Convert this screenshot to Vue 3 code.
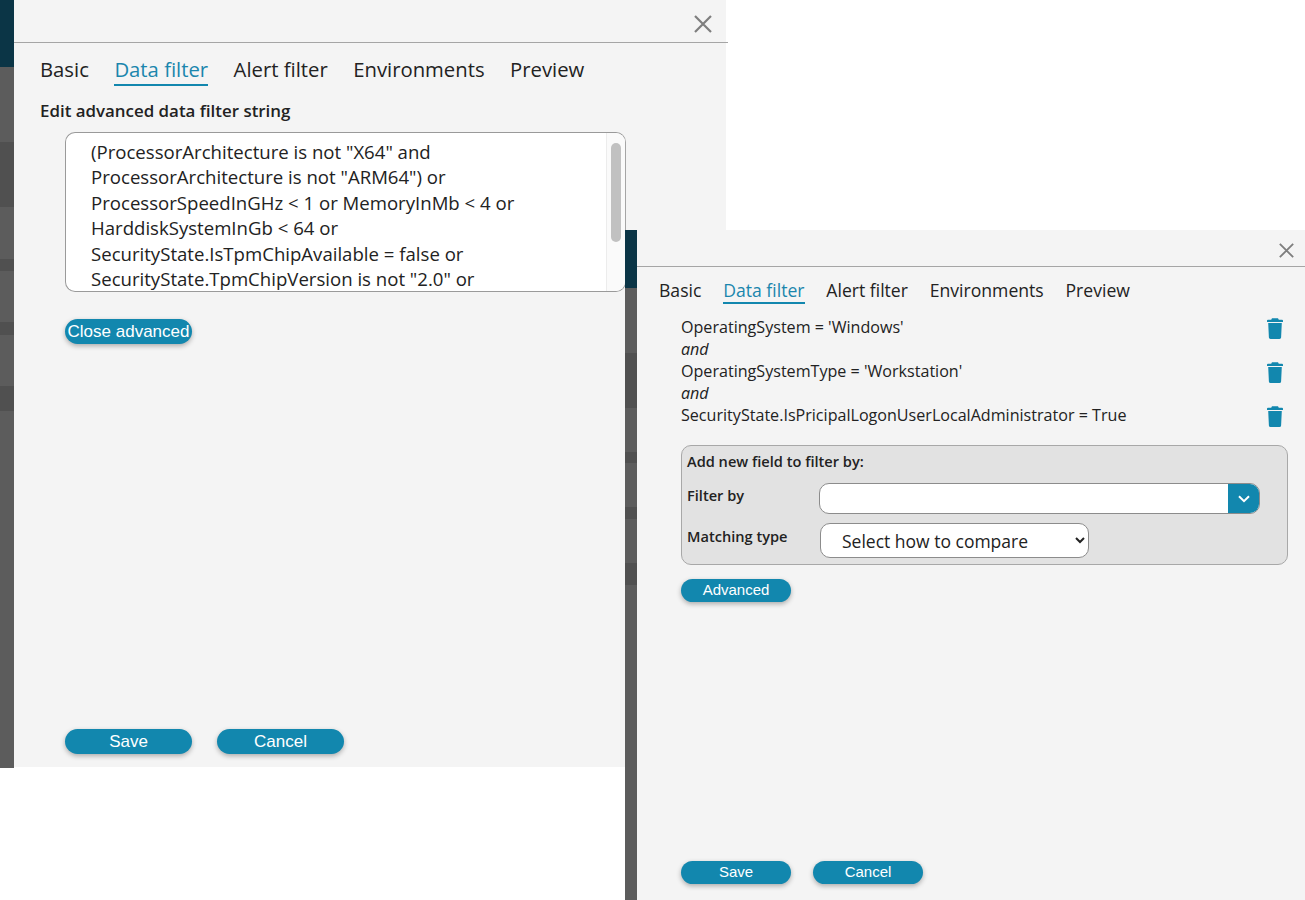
<script setup>
const tabs = ['Basic', 'Data filter', 'Alert filter', 'Environments', 'Preview']
const filterLines = [
  '(ProcessorArchitecture is not "X64" and',
  'ProcessorArchitecture is not "ARM64") or',
  'ProcessorSpeedInGHz < 1 or MemoryInMb < 4 or',
  'HarddiskSystemInGb < 64 or',
  'SecurityState.IsTpmChipAvailable = false or',
  'SecurityState.TpmChipVersion is not "2.0" or'
]
const rows = [
  { text: "OperatingSystem = 'Windows'", trash: true },
  { text: 'and', italic: true },
  { text: "OperatingSystemType = 'Workstation'", trash: true },
  { text: 'and', italic: true },
  { text: 'SecurityState.IsPricipalLogonUserLocalAdministrator = True', trash: true }
]
</script>

<template>
  <div class="desk">
    <section class="win win-a">
      <div class="strip">
        <i class="seg teal s67"></i><i class="seg s75"></i><i class="seg dark s63"></i><i class="seg s52"></i>
        <i class="seg dark s12"></i><i class="seg s51"></i><i class="seg dark s13"></i><i class="seg s51"></i>
        <i class="seg dark s25"></i><i class="seg grow"></i>
      </div>
      <div class="panel panel-a">
        <header class="head">
          <svg class="close" viewBox="0 0 18 18"><path d="M1 1l16 16M17 1L1 17" /></svg>
        </header>
        <nav class="tabs">
          <span v-for="t in tabs" :key="t" class="tab" :class="{ on: t === 'Data filter' }">{{ t }}</span>
        </nav>
        <h2 class="edit-title">Edit advanced data filter string</h2>
        <div class="editor">
          <div class="editor-text">
            <div v-for="l in filterLines" :key="l">{{ l }}</div>
          </div>
          <div class="track"><div class="thumb"></div></div>
        </div>
        <button class="btn btn-close">Close advanced</button>
        <div class="foot foot-a">
          <button class="btn big">Save</button>
          <button class="btn big">Cancel</button>
        </div>
      </div>
    </section>

    <section class="win win-b">
      <div class="strip strip-b">
        <i class="seg teal s58"></i><i class="seg s65"></i><i class="seg dark s55"></i><i class="seg s44"></i>
        <i class="seg dark s11"></i><i class="seg s44"></i><i class="seg dark s12"></i><i class="seg s44"></i>
        <i class="seg dark s22"></i><i class="seg grow"></i>
      </div>
      <div class="panel panel-b">
        <header class="head head-b">
          <svg class="close close-b" viewBox="0 0 18 18"><path d="M1 1l16 16M17 1L1 17" /></svg>
        </header>
        <nav class="tabs tabs-b">
          <span v-for="t in tabs" :key="t" class="tab" :class="{ on: t === 'Data filter' }">{{ t }}</span>
        </nav>
        <div class="rows">
          <div v-for="(r, i) in rows" :key="i" class="row">
            <span :class="{ it: r.italic }">{{ r.text }}</span>
            <svg v-if="r.trash" class="trash" viewBox="0 0 16 21">
              <path d="M5 0.3h6l.8 1.5H15a1 1 0 0 1 1 1V4H0V2.8a1 1 0 0 1 1-1h3.200z" />
              <path d="M1.200 5h13.600l-.7 14.500A1.600 1.600 0 0 1 12.500 21h-9a1.600 1.600 0 0 1-1.600-1.500z" />
            </svg>
          </div>
        </div>
        <div class="box">
          <div class="box-title">Add new field to filter by:</div>
          <div class="field f1">
            <label>Filter by</label>
            <div class="combo">
              <div class="combo-in"></div>
              <div class="combo-btn">
                <svg viewBox="0 0 12 8"><path d="M1 1.200l5 5 5-5" /></svg>
              </div>
            </div>
          </div>
          <div class="field f2">
            <label>Matching type</label>
            <select class="sel"><option>Select how to compare</option></select>
          </div>
        </div>
        <button class="btn small btn-adv">Advanced</button>
        <div class="foot foot-b">
          <button class="btn small">Save</button>
          <button class="btn small">Cancel</button>
        </div>
      </div>
    </section>
  </div>
</template>

<style>
html, body { margin: 0; background: #fff; }
</style>

<style scoped>
.desk {
  position: relative;
  width: 1305px;
  height: 900px;
  overflow: hidden;
  background: #fff;
  font-family: "Open Sans", "Liberation Sans", sans-serif;
  color: #222;
}
.win { position: absolute; display: flex; }
.win-a { left: 0; top: 0; width: 726px; height: 768px; }
.win-b { left: 625px; top: 230px; width: 680px; height: 670px; }

.strip { width: 14px; flex: none; display: flex; flex-direction: column; background: #5c5c5c; }
.strip-b { width: 12px; }
.seg { display: block; flex: none; background: #5c5c5c; }
.seg.dark { background: #505050; }
.seg.teal { background: #0b3546; }
.seg.grow { flex: 1; }
.s67 { height: 67px; } .s75 { height: 75px; } .s63 { height: 65px; } .s52 { height: 52px; }
.s12 { height: 12px; } .s51 { height: 51px; } .s13 { height: 13px; } .s25 { height: 25px; }
.s58 { height: 58px; } .s65 { height: 65px; } .s55 { height: 55px; } .s44 { height: 44px; }
.s11 { height: 11px; } .s22 { height: 22px; }

.panel {
  flex: 1;
  display: flex;
  flex-direction: column;
  background: #f4f4f4;
  min-width: 0;
}
.panel-a { padding-bottom: 13px; margin-bottom: 1px; }
.panel-b { padding-bottom: 16px; }
.head {
  height: 42px;
  width: 714px;
  border-bottom: 1.500px solid #a5a5a5;
  display: flex;
  justify-content: flex-end;
  align-items: flex-start;
  flex: none;
}
.head-b { height: 36px; width: 668px; }
.close { width: 18px; height: 18px; margin: 15px 16px 0 0; }
.close-b { width: 15px; height: 15px; margin: 13px 11px 0 0; }
.close path { stroke: #7e7e7e; stroke-width: 2.200; fill: none; }

.tabs { display: flex; gap: 25.500px; padding: 13px 0 0 26px; font-size: 20.300px; line-height: 27px; flex: none; }
.tab { padding-bottom: 1px; border-bottom: 2px solid transparent; }
.tab.on { color: #1a86ad; border-bottom-color: #1287ae; }
.tabs-b { gap: 21.800px; padding: 11px 0 0 22px; font-size: 17.600px; line-height: 24px; }
.tabs-b .tab { padding-bottom: 0; }

.edit-title { margin: 14px 0 0 26px; font-size: 16.900px; line-height: 22px; font-weight: 600; color: #222; }

.editor {
  position: relative;
  box-sizing: border-box;
  margin: 10px 0 0 51px;
  width: 561px;
  height: 160px;
  background: #fff;
  border: 1px solid #9a9a9a;
  border-right-color: #a5a5a5;
  border-radius: 10px;
  overflow: hidden;
}
.editor-text { padding: 6px 40px 0 25px; font-size: 18.600px; line-height: 25.400px; white-space: nowrap; }
.track {
  position: absolute;
  right: 0;
  top: 0;
  bottom: 0;
  width: 18px;
  background: #fafafa;
  border-left: 1px solid #ececec;
}
.thumb { position: absolute; left: 4px; top: 10px; width: 10px; height: 99px; border-radius: 5px; background: #c1c1c1; }

.btn {
  display: block;
  border: 0;
  padding: 0;
  background: #1287ae;
  color: #fff;
  border-radius: 13px;
  font-family: "Liberation Sans", Arial, sans-serif;
  font-size: 17px;
  box-shadow: 0 2px 5px rgba(0, 0, 0, .3);
}
.btn-close { margin: 27px 0 0 51px; width: 127px; height: 25px; }
.big { width: 127px; height: 25px; }
.foot { margin-top: auto; display: flex; }
.foot-a { margin-left: 51px; gap: 25px; }
.small { width: 110px; height: 23px; padding-bottom: 2px; font-size: 15px; border-radius: 12px; }
.foot-b { margin-left: 44px; gap: 22px; }

.rows { margin: 12px 22px 0 44px; font-size: 16.100px; line-height: 22px; flex: none; }
.row { display: flex; justify-content: space-between; align-items: center; height: 22px; }
.it { font-style: italic; }
.trash { width: 16px; height: 21px; margin-top: 2px; fill: #1287ae; }

.box {
  box-sizing: border-box;
  margin: 19px 0 0 44px;
  width: 607px;
  height: 120px;
  background: #e2e2e2;
  border: 1px solid #a8a8a8;
  border-radius: 10px;
  padding: 5px 0 0 5px;
  font-size: 14.600px;
  font-weight: 600;
  flex: none;
}
.box-title { line-height: 20px; }
.field { display: flex; }
.field label { width: 132px; flex: none; line-height: 20px; }
.f1 { margin-top: 12px; align-items: center; }
.f1 label { padding-bottom: 8px; }
.f2 { margin-top: 9px; align-items: flex-start; }
.f2 label { padding-top: 3px; }
.combo { display: flex; width: 441px; height: 31px; border: 1px solid #8c8c8c; box-sizing: border-box; border-radius: 10px; overflow: hidden; background: #fff; }
.combo-in { flex: 1; }
.combo-btn { width: 31px; background: #1287ae; display: flex; align-items: center; justify-content: center; }
.combo-btn svg { width: 12px; height: 8px; }
.combo-btn path { fill: none; stroke: #fff; stroke-width: 2; }
.sel {
  box-sizing: border-box;
  width: 269px;
  height: 35px;
  margin-left: 1px;
  padding-left: 17px;
  background-color: #fff;
  border: 1px solid #8c8c8c;
  border-radius: 10px;
  font-family: "Open Sans", sans-serif;
  font-size: 17.500px;
  color: #222;
}
.btn-adv { margin: 14px 0 0 44px; }
</style>
